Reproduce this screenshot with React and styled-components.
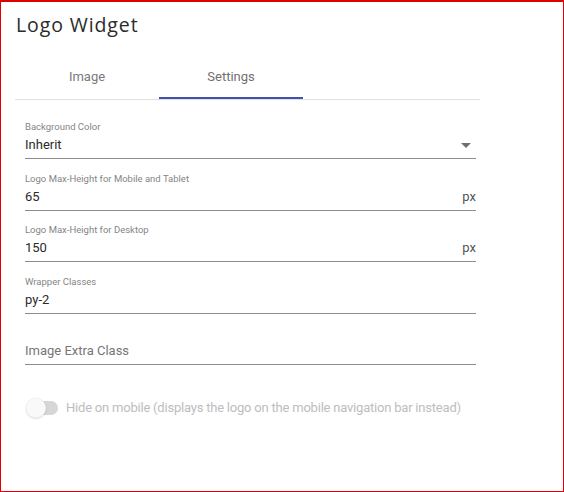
import React from 'react'
import styled, { createGlobalStyle } from 'styled-components'

const GlobalStyle = createGlobalStyle`
  html, body {
    margin: 0;
    padding: 0;
    background: #fff;
  }
  * {
    box-sizing: border-box;
  }
`

const Frame = styled.div`
  width: 564px;
  height: 492px;
  border: 1px solid #e00000;
  border-top-width: 2px;
  padding: 11px 0 0 14px;
  background: #fff;
  font-family: Roboto, "Liberation Sans", sans-serif;
`

const Title = styled.h2`
  margin: 0;
  font-family: "Open Sans", "Noto Sans", sans-serif;
  font-weight: 400;
  font-size: 19.5px;
  letter-spacing: 0.9px;
  line-height: 24px;
  color: #2b2b2b;
  padding-left: 1px;
`

const TabBar = styled.div`
  display: flex;
  width: 465px;
  margin-top: 15px;
  border-bottom: 1px solid #e0e0e0;
`

const Tab = styled.button`
  width: 144px;
  height: 47px;
  padding: 3px 0 0;
  border: none;
  border-bottom: 2px solid ${p => (p.$active ? '#3f51b5' : 'transparent')};
  background: none;
  display: flex;
  align-items: center;
  justify-content: center;
  font-family: Roboto, "Liberation Sans", sans-serif;
  font-size: 13px;
  color: ${p => (p.$active ? '#707070' : '#7a7a7a')};
  cursor: pointer;
`

const Form = styled.div`
  display: flex;
  flex-direction: column;
  gap: 13.5px;
  width: 451px;
  margin: 21px 0 0 10px;
`

const Field = styled.div`
  display: flex;
  flex-direction: column;
`

const Label = styled.div`
  font-size: 9.5px;
  line-height: 12px;
  height: 12px;
  color: #858585;
`

const InputRow = styled.div`
  display: flex;
  align-items: center;
  padding: 2px 0 3px;
  border-bottom: 1px solid #8c8c8c;
`

const Value = styled.div`
  flex: 1;
  font-size: 13px;
  line-height: 20px;
  color: ${p => (p.$placeholder ? '#767676' : '#2a2a2a')};
`

const Adornment = styled.span`
  font-size: 13px;
  line-height: 20px;
  color: #555;
`

const Caret = styled.svg`
  width: 10px;
  height: 5px;
  margin-right: 5px;
  fill: #707070;
`

const SwitchRow = styled.label`
  display: flex;
  align-items: center;
  gap: 8px;
  margin: 19px 0 0 1px;
  font-size: 13px;
  letter-spacing: -0.21px;
  line-height: 20px;
  white-space: nowrap;
  color: #bdbdbd;
`

const Switch = styled.span`
  position: relative;
  width: 32px;
  height: 20px;
  display: inline-block;
  flex-shrink: 0;
`

const Track = styled.span`
  position: absolute;
  left: 5px;
  right: 0;
  top: 3px;
  height: 14px;
  border-radius: 7px;
  background: #d6d6d6;
`

const Thumb = styled.span`
  position: absolute;
  left: 0;
  top: 0;
  width: 20px;
  height: 20px;
  border-radius: 50%;
  background: #f9f9f9;
  box-shadow: 0 1px 2px rgba(0, 0, 0, 0.12), 0 0 1px rgba(0, 0, 0, 0.15);
`

const fields = [
  { label: 'Background Color', value: 'Inherit', select: true },
  { label: 'Logo Max-Height for Mobile and Tablet', value: '65', unit: 'px' },
  { label: 'Logo Max-Height for Desktop', value: '150', unit: 'px' },
  { label: 'Wrapper Classes', value: 'py-2' },
  { label: '', placeholder: 'Image Extra Class' },
]

const TextField = ({ field }) =>
  <Field>
    <Label>{field.label}</Label>
    <InputRow>
      <Value $placeholder={!!field.placeholder}>{field.value || field.placeholder}</Value>
      {field.unit && <Adornment>{field.unit}</Adornment>}
      {field.select &&
        <Caret viewBox="0 0 10 5"><path d="M0 0h10L5 5z" /></Caret>}
    </InputRow>
  </Field>

export default function App() {
  return (
    <>
      <GlobalStyle />
      <Frame>
        <Title>Logo Widget</Title>
        <TabBar>
          <Tab>Image</Tab>
          <Tab $active>Settings</Tab>
        </TabBar>
        <Form>
          {fields.map(f => <TextField key={f.label || f.placeholder} field={f} />)}
          <SwitchRow>
            <Switch>
              <Track />
              <Thumb />
            </Switch>
            Hide on mobile (displays the logo on the mobile navigation bar instead)
          </SwitchRow>
        </Form>
      </Frame>
    </>
  )
}
